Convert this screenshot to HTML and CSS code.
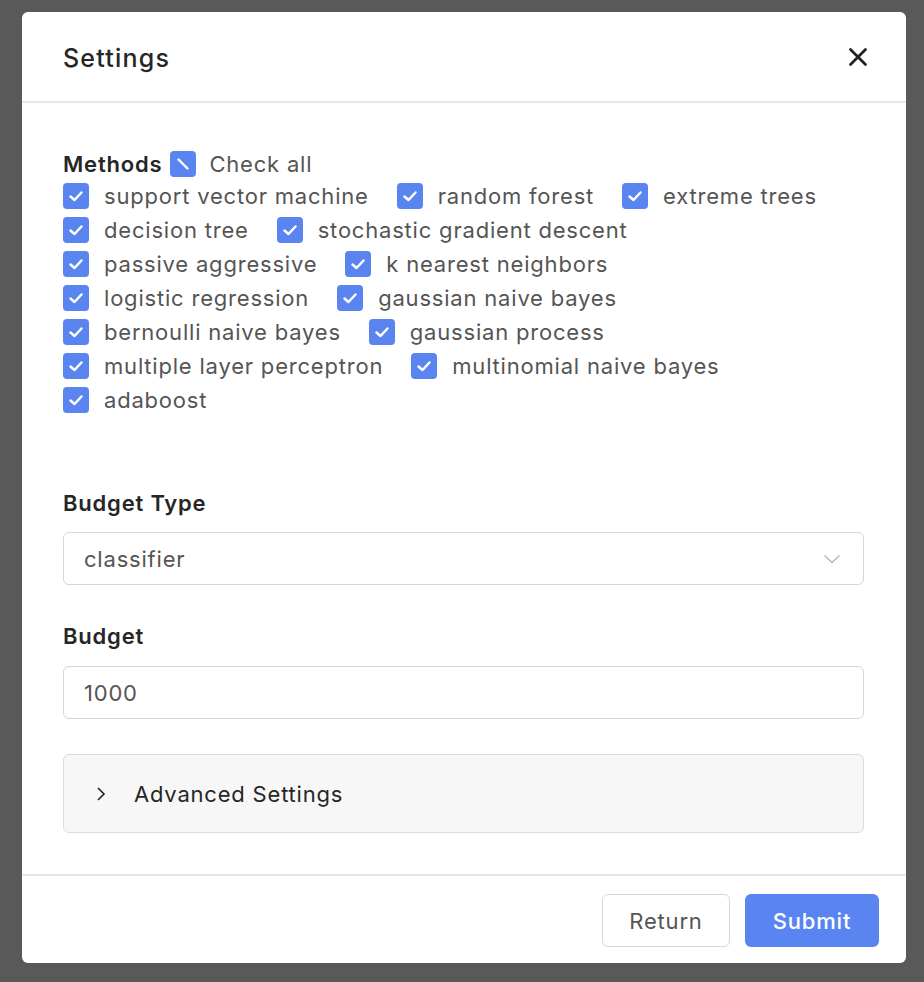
FILE: index.html
```html
<!DOCTYPE html>
<html>
<head>
<meta charset="utf-8">
<link rel="stylesheet" href="styles.css">
</head>
<body>
<div class="overlay">
  <div class="modal">
    <div class="modal-header">
      <h2 class="title">Settings</h2>
      <button class="close" aria-label="close">
        <svg width="20" height="20" viewBox="0 0 20 20"><path d="M2.5 2.5 L17.5 17.5 M17.5 2.5 L2.5 17.5" stroke="#222" stroke-width="2.8" stroke-linecap="round"/></svg>
      </button>
    </div>
    <div class="modal-body">
      <div class="methods-head">
        <span class="label">Methods</span>
        <span class="box box-all"><svg width="26" height="26" viewBox="0 0 26 26"><path d="M8.5 8.5 L17.5 17.5" stroke="#fff" stroke-width="2.4" stroke-linecap="round"/></svg></span>
        <span class="check-text">Check all</span>
      </div>
      <div class="row">
        <label class="item"><span class="box"><svg width="26" height="26" viewBox="0 0 26 26"><path d="M7.5 13.5 L11.5 17 L18.5 9.5" fill="none" stroke="#fff" stroke-width="2.5" stroke-linecap="round" stroke-linejoin="round"/></svg></span><span class="check-text">support vector machine</span></label>
        <label class="item"><span class="box"><svg width="26" height="26" viewBox="0 0 26 26"><path d="M7.5 13.5 L11.5 17 L18.5 9.5" fill="none" stroke="#fff" stroke-width="2.5" stroke-linecap="round" stroke-linejoin="round"/></svg></span><span class="check-text">random forest</span></label>
        <label class="item"><span class="box"><svg width="26" height="26" viewBox="0 0 26 26"><path d="M7.5 13.5 L11.5 17 L18.5 9.5" fill="none" stroke="#fff" stroke-width="2.5" stroke-linecap="round" stroke-linejoin="round"/></svg></span><span class="check-text">extreme trees</span></label>
      </div>
      <div class="row">
        <label class="item"><span class="box"><svg width="26" height="26" viewBox="0 0 26 26"><path d="M7.5 13.5 L11.5 17 L18.5 9.5" fill="none" stroke="#fff" stroke-width="2.5" stroke-linecap="round" stroke-linejoin="round"/></svg></span><span class="check-text">decision tree</span></label>
        <label class="item"><span class="box"><svg width="26" height="26" viewBox="0 0 26 26"><path d="M7.5 13.5 L11.5 17 L18.5 9.5" fill="none" stroke="#fff" stroke-width="2.5" stroke-linecap="round" stroke-linejoin="round"/></svg></span><span class="check-text">stochastic gradient descent</span></label>
      </div>
      <div class="row">
        <label class="item"><span class="box"><svg width="26" height="26" viewBox="0 0 26 26"><path d="M7.5 13.5 L11.5 17 L18.5 9.5" fill="none" stroke="#fff" stroke-width="2.5" stroke-linecap="round" stroke-linejoin="round"/></svg></span><span class="check-text">passive aggressive</span></label>
        <label class="item"><span class="box"><svg width="26" height="26" viewBox="0 0 26 26"><path d="M7.5 13.5 L11.5 17 L18.5 9.5" fill="none" stroke="#fff" stroke-width="2.5" stroke-linecap="round" stroke-linejoin="round"/></svg></span><span class="check-text">k nearest neighbors</span></label>
      </div>
      <div class="row">
        <label class="item"><span class="box"><svg width="26" height="26" viewBox="0 0 26 26"><path d="M7.5 13.5 L11.5 17 L18.5 9.5" fill="none" stroke="#fff" stroke-width="2.5" stroke-linecap="round" stroke-linejoin="round"/></svg></span><span class="check-text">logistic regression</span></label>
        <label class="item"><span class="box"><svg width="26" height="26" viewBox="0 0 26 26"><path d="M7.5 13.5 L11.5 17 L18.5 9.5" fill="none" stroke="#fff" stroke-width="2.5" stroke-linecap="round" stroke-linejoin="round"/></svg></span><span class="check-text">gaussian naive bayes</span></label>
      </div>
      <div class="row">
        <label class="item"><span class="box"><svg width="26" height="26" viewBox="0 0 26 26"><path d="M7.5 13.5 L11.5 17 L18.5 9.5" fill="none" stroke="#fff" stroke-width="2.5" stroke-linecap="round" stroke-linejoin="round"/></svg></span><span class="check-text">bernoulli naive bayes</span></label>
        <label class="item"><span class="box"><svg width="26" height="26" viewBox="0 0 26 26"><path d="M7.5 13.5 L11.5 17 L18.5 9.5" fill="none" stroke="#fff" stroke-width="2.5" stroke-linecap="round" stroke-linejoin="round"/></svg></span><span class="check-text">gaussian process</span></label>
      </div>
      <div class="row">
        <label class="item"><span class="box"><svg width="26" height="26" viewBox="0 0 26 26"><path d="M7.5 13.5 L11.5 17 L18.5 9.5" fill="none" stroke="#fff" stroke-width="2.5" stroke-linecap="round" stroke-linejoin="round"/></svg></span><span class="check-text">multiple layer perceptron</span></label>
        <label class="item"><span class="box"><svg width="26" height="26" viewBox="0 0 26 26"><path d="M7.5 13.5 L11.5 17 L18.5 9.5" fill="none" stroke="#fff" stroke-width="2.5" stroke-linecap="round" stroke-linejoin="round"/></svg></span><span class="check-text">multinomial naive bayes</span></label>
      </div>
      <div class="row">
        <label class="item"><span class="box"><svg width="26" height="26" viewBox="0 0 26 26"><path d="M7.5 13.5 L11.5 17 L18.5 9.5" fill="none" stroke="#fff" stroke-width="2.5" stroke-linecap="round" stroke-linejoin="round"/></svg></span><span class="check-text">adaboost</span></label>
      </div>

      <div class="field field-first">
        <div class="label">Budget Type</div>
        <div class="control select">
          <span>classifier</span>
          <svg width="18" height="10" viewBox="0 0 18 10"><path d="M1.5 1.5 L9 8.5 L16.5 1.5" fill="none" stroke="#b5b5b5" stroke-width="1.4"/></svg>
        </div>
      </div>
      <div class="field field-second">
        <div class="label">Budget</div>
        <div class="control input">1000</div>
      </div>
      <div class="advanced">
        <svg width="12" height="16" viewBox="0 0 12 16"><path d="M3 2 L9 8 L3 14" fill="none" stroke="#222" stroke-width="1.6"/></svg>
        <span>Advanced Settings</span>
      </div>
    </div>
    <div class="modal-footer">
      <button class="btn btn-default">Return</button>
      <button class="btn btn-primary">Submit</button>
    </div>
  </div>
</div>
</body>
</html>
```
FILE: styles.css
```css
* { box-sizing: border-box; }
html, body { margin: 0; padding: 0; }
body {
  background: #595959;
  font-family: Inter, "Noto Sans", sans-serif;
  width: 924px;
  height: 982px;
  overflow: hidden;
}
.overlay {
  padding: 12px 18px 0 22px;
}
.modal {
  width: 884px;
  height: 951px;
  background: #fff;
  border-radius: 6px;
  display: flex;
  flex-direction: column;
}
.modal-header {
  height: 91px;
  border-bottom: 2px solid #e6e6e6;
  display: flex;
  align-items: center;
  justify-content: space-between;
  padding: 0 38px 0 41px;
}
.title {
  margin: 0;
  font-size: 25px;
  font-weight: 500;
  color: #262626;
  letter-spacing: 1.2px;
  padding-top: 2px;
}
.close {
  border: 0;
  background: none;
  padding: 0;
  width: 20px;
  height: 20px;
  display: flex;
}
.modal-body {
  flex: 1;
  padding: 46px 42px 0 41px;
}
.label {
  font-size: 22px;
  font-weight: 600;
  color: #262626;
  letter-spacing: 0.8px;
}
.methods-head {
  display: flex;
  align-items: center;
  height: 30px;
}
.methods-head .label { margin-right: 8px; }
.box {
  width: 26px;
  height: 26px;
  border-radius: 4px;
  background: #5a85f1;
  display: inline-flex;
  flex: none;
  margin-right: 15px;
}
.box-all { margin-right: 13px; }
.check-text {
  font-size: 22px;
  color: #555;
  letter-spacing: 0.8px;
}
.row {
  display: flex;
  height: 34px;
  align-items: center;
}
.item {
  display: flex;
  align-items: center;
  margin-right: 28px;
}
.field .label { height: 30px; line-height: 30px; }
.field-first { margin-top: 71px; }
.field-first .label { margin-bottom: 14px; }
.field-second { margin-top: 36px; }
.field-second .label { margin-bottom: 15px; }
.control {
  height: 53px;
  border: 1.5px solid #d6d6d6;
  border-radius: 6px;
  display: flex;
  align-items: center;
  font-size: 22px;
  color: #555;
  letter-spacing: 0.8px;
}
.select {
  justify-content: space-between;
  padding: 0 22px 0 20px;
}
.input { padding: 0 20px; }
.advanced {
  margin-top: 35px;
  height: 79px;
  background: #f7f7f7;
  border: 1.5px solid #dcdcdc;
  border-radius: 6px;
  display: flex;
  align-items: center;
  padding-left: 31px;
  font-size: 22px;
  color: #262626;
  letter-spacing: 0.8px;
}
.advanced svg { margin-right: 27px; }
.modal-footer {
  height: 89px;
  border-top: 2px solid #e6e6e6;
  display: flex;
  justify-content: flex-end;
  align-items: flex-start;
  padding: 18px 27px 0 0;
  gap: 15px;
}
.btn {
  height: 53px;
  border-radius: 6px;
  font-family: Inter, "Noto Sans", sans-serif;
  font-size: 22px;
  letter-spacing: 0.8px;
  padding: 0;
}
.btn-default {
  width: 128px;
  background: #fff;
  border: 1.5px solid #d6d6d6;
  color: #555;
}
.btn-primary {
  width: 134px;
  background: #5a85f1;
  border: 0;
  color: #fff;
  font-weight: 500;
}
```
